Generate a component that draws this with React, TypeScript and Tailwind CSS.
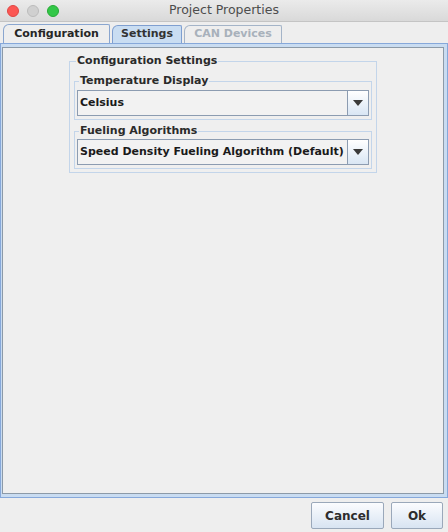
const FONT = { fontFamily: '"DejaVu Sans", "Noto Sans", sans-serif' };

const Arrow = () => (
  <svg width="10" height="6" viewBox="0 0 10 6">
    <path d="M0 0 H10 L5 6 Z" fill="#3a3a3a" />
  </svg>
);

const Combo = ({ value }: { value: string }) => (
  <div className="flex h-[26px] border border-[#8c9cb1] bg-[#f2f2f2]">
    <div className="flex-1 flex items-center pl-[2px] text-[11px] font-bold text-[#1a1a1a]">
      {value}
    </div>
    <div className="w-[21px] flex items-center justify-center border-l border-[#8c9cb1] bg-gradient-to-b from-[#ffffff] to-[#d9e6f4]">
      <Arrow />
    </div>
  </div>
);

const Group = ({
  title,
  children,
  className,
}: {
  title: string;
  children: React.ReactNode;
  className?: string;
}) => (
  <fieldset
    className={`border border-[#c3d5ea] px-[2px] pb-[3px] ${className ?? ""}`}
  >
    <legend className="px-[1px] ml-[2px] text-[11px] font-bold text-[#2a2a2a] leading-[14px]">
      {title}
    </legend>
    {children}
  </fieldset>
);

export default function App() {
  return (
    <div
      className="w-[448px] h-[532px] bg-[#eeeeee] flex flex-col overflow-hidden"
      style={FONT}
    >
      {/* title bar */}
      <div className="h-[22px] flex items-center relative bg-gradient-to-b from-[#ebebeb] to-[#d9d9d9] border-b border-[#c4c4c4]">
        <div className="flex gap-[8px] pl-[7px]">
          <span className="w-[12px] h-[12px] rounded-full bg-[#fc5753] border border-[#df4744]" />
          <span className="w-[12px] h-[12px] rounded-full bg-[#d0d0d0] border border-[#bcbcbc]" />
          <span className="w-[12px] h-[12px] rounded-full bg-[#33c748] border border-[#27aa35]" />
        </div>
        <div className="absolute inset-0 flex items-center justify-center text-[12.5px] text-[#4d4d4d]">
          Project Properties
        </div>
      </div>

      {/* tabs */}
      <div className="h-[20px] flex items-end pl-[3px] gap-[2px] mt-[1px]">
        <div className="h-[19px] w-[107px] flex items-center justify-center border border-b-0 border-[#8aa6cf] rounded-tl-[6px] rounded-tr-[2px] bg-[#eeeeee] text-[11px] font-bold text-[#262626]">
          Configuration
        </div>
        <div className="h-[18px] w-[70px] flex items-center justify-center border border-b-0 border-[#7f9fd0] rounded-tl-[6px] rounded-tr-[2px] bg-[#c9ddf2] text-[11px] font-bold text-[#333333]">
          Settings
        </div>
        <div className="h-[18px] w-[98px] flex items-center justify-center border border-b-0 border-[#a4b4c8] rounded-tl-[6px] rounded-tr-[2px] bg-[#eeeeee] text-[11px] font-bold text-[#a8b1bb]">
          CAN Devices
        </div>
      </div>

      {/* panel */}
      <div className="h-[455px] border border-[#86a8da] bg-[#c9dcf1] pt-[3px] pl-[1px] pr-[3px] pb-[3px] flex">
        <div className="flex-1 border border-[#8c9aa8] bg-[#efefef] flex justify-center pt-[6px] items-start">
          <Group title="Configuration Settings" className="w-[308px] px-[4px] pb-[3px]">
            <Group title="Temperature Display" className="mt-[6px] pt-[2px]">
              <Combo value="Celsius" />
            </Group>
            <Group title="Fueling Algorithms" className="mt-[4px] pt-[1px]">
              <Combo value="Speed Density Fueling Algorithm (Default)" />
            </Group>
          </Group>
        </div>
      </div>

      {/* buttons */}
      <div className="flex-1 flex justify-end items-start gap-[7px] pr-[5px] pt-[4px]">
        <button className="w-[73px] h-[27px] border border-[#9aa8ba] rounded-[2px] bg-gradient-to-b from-[#fbfcfe] to-[#d8e4f2] text-[12px] font-bold text-[#2d2d2d]">
          Cancel
        </button>
        <button className="w-[52px] h-[27px] border border-[#9aa8ba] rounded-[2px] bg-gradient-to-b from-[#fbfcfe] to-[#d8e4f2] text-[12px] font-bold text-[#2d2d2d]">
          Ok
        </button>
      </div>
    </div>
  );
}
